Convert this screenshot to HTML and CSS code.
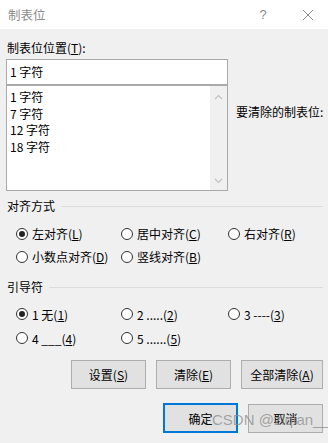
FILE: index.html
```html
<!DOCTYPE html>
<html lang="zh">
<head>
<meta charset="utf-8">
<link rel="stylesheet" href="styles.css">
</head>
<body>
<div class="dialog">
  <div class="titlebar">
    <span class="title">制表位</span>
    <span class="help">?</span>
    <span class="close">
      <svg width="12" height="12" viewBox="0 0 12 12"><path d="M1 1 L11 11 M11 1 L1 11" stroke="#8a8a8a" stroke-width="1" fill="none"/></svg>
    </span>
  </div>
  <div class="content">
    <div class="top">
      <div class="leftcol">
        <div class="label">制表位位置(<u>T</u>):</div>
        <div class="input">1 字符</div>
        <div class="list">
          <div class="items">
            <div class="item">1 字符</div>
            <div class="item">7 字符</div>
            <div class="item">12 字符</div>
            <div class="item">18 字符</div>
          </div>
          <div class="scrollbar">
            <svg width="9" height="6" viewBox="0 0 9 6"><path d="M1 5 L4.5 1.5 L8 5" stroke="#c2c2c2" stroke-width="1.2" fill="none"/></svg>
            <svg width="9" height="6" viewBox="0 0 9 6"><path d="M1 1 L4.5 4.5 L8 1" stroke="#c2c2c2" stroke-width="1.2" fill="none"/></svg>
          </div>
        </div>
      </div>
      <div class="rightcol">要清除的制表位:</div>
    </div>

    <div class="group-head align-head"><span>对齐方式</span><i class="rule"></i></div>
    <div class="radios align">
      <div class="radio"><span class="dot on"></span>左对齐(<u>L</u>)</div>
      <div class="radio"><span class="dot"></span>居中对齐(<u>C</u>)</div>
      <div class="radio"><span class="dot"></span>右对齐(<u>R</u>)</div>
      <div class="radio"><span class="dot"></span>小数点对齐(<u>D</u>)</div>
      <div class="radio"><span class="dot"></span>竖线对齐(<u>B</u>)</div>
    </div>

    <div class="group-head leader-head"><span>引导符</span><i class="rule"></i></div>
    <div class="radios leader">
      <div class="radio"><span class="dot on"></span>1 无(<u>1</u>)</div>
      <div class="radio"><span class="dot"></span>2 .....(<u>2</u>)</div>
      <div class="radio"><span class="dot"></span>3 ----(<u>3</u>)</div>
      <div class="radio"><span class="dot"></span>4 ___(<u>4</u>)</div>
      <div class="radio"><span class="dot"></span>5 ......(<u>5</u>)</div>
    </div>

    <div class="btnrow actions">
      <div class="btn w75">设置(<u>S</u>)</div>
      <div class="btn w75">清除(<u>E</u>)</div>
      <div class="btn w82">全部清除(<u>A</u>)</div>
    </div>
    <div class="btnrow final">
      <div class="btn w75 default">确定</div>
      <div class="btn w75">取消</div>
    </div>
    <div class="watermark">CSDN @ziqian__</div>
  </div>
</div>
</body>
</html>
```

FILE: styles.css
```css
html, body {
  margin: 0;
  padding: 0;
}
body {
  width: 328px;
  height: 443px;
  overflow: hidden;
  font-family: "Noto Sans CJK SC", "Noto Sans", "Liberation Sans", sans-serif;
  font-size: 12px;
  color: #000;
}
u {
  text-decoration: underline;
  text-underline-offset: 1px;
}
.dialog {
  width: 328px;
  height: 443px;
  display: flex;
  flex-direction: column;
}
.titlebar {
  height: 29px;
  background: #fff;
  display: flex;
  align-items: center;
  padding-left: 8px;
  box-sizing: border-box;
}
.title {
  font-size: 12.5px;
  color: #8c8c8c;
  flex: 1;
  line-height: 16px;
}
.help {
  font-family: "Liberation Sans", sans-serif;
  font-size: 13px;
  color: #8c8c8c;
  width: 14px;
  text-align: center;
  margin-right: 32px;
}
.close {
  width: 12px;
  height: 12px;
  margin-right: 14px;
  display: flex;
}
.content {
  flex: 1;
  background: #f0f0f0;
  padding: 11px 0 0 0;
  position: relative;
}
.top {
  display: flex;
  padding-left: 6px;
}
.leftcol {
  width: 222px;
}
.label {
  line-height: 16px;
  padding-left: 1px;
}
.input {
  margin-top: 3px;
  height: 26px;
  box-sizing: border-box;
  border: 1px solid #a9a9a9;
  background: #fff;
  padding-left: 3px;
  line-height: 23px;
}
.list {
  height: 106px;
  box-sizing: border-box;
  border: 1px solid #a9a9a9;
  background: #fff;
  display: flex;
}
.items {
  flex: 1;
  padding: 3px 0 0 3px;
}
.item {
  line-height: 16.5px;
}
.scrollbar {
  width: 17px;
  background: #f0f0f0;
  display: flex;
  flex-direction: column;
  justify-content: space-between;
  align-items: center;
  padding: 8px 0 6px;
  box-sizing: border-box;
}
.rightcol {
  margin-left: 8px;
  margin-top: 64px;
  line-height: 16px;
}
.group-head {
  display: flex;
  align-items: center;
  padding-left: 7px;
  padding-right: 5px;
  line-height: 16px;
}
.align-head { margin-top: 7px; }
.leader-head { margin-top: 11px; }
.group-head .rule {
  flex: 1;
  height: 1px;
  background: #dcdcdc;
  margin-left: 6px;
}
.radios {
  display: grid;
  grid-template-columns: 105px 107px auto;
  padding-left: 16px;
}
.align { margin-top: 8px; grid-auto-rows: 23px; }
.leader { margin-top: 7px; grid-auto-rows: 24px; }
.radio {
  display: flex;
  align-items: center;
  white-space: nowrap;
}
.dot {
  width: 12px;
  height: 12px;
  box-sizing: border-box;
  border: 1px solid #333;
  border-radius: 50%;
  background: #fff;
  margin-right: 4px;
  display: flex;
  align-items: center;
  justify-content: center;
}
.dot.on::after {
  content: "";
  width: 6px;
  height: 6px;
  border-radius: 50%;
  background: #222;
}
.btnrow {
  display: flex;
  justify-content: flex-end;
  gap: 10px;
  padding-right: 5px;
}
.actions { margin-top: 10px; }
.final { margin-top: 15px; }
.btn {
  height: 29px;
  box-sizing: border-box;
  border: 1px solid #adadad;
  background: #e1e1e1;
  display: flex;
  align-items: center;
  justify-content: center;
}
.w75 { width: 75px; }
.w82 { width: 82px; }
.btn.default {
  border: 2px solid #0078d7;
  height: 30px;
  margin-top: -1px;
}
.watermark {
  position: absolute;
  left: 212px;
  top: 382px;
  white-space: nowrap;
  font-family: "Liberation Sans", sans-serif;
  font-size: 15px;
  line-height: 17px;
  color: rgba(140, 140, 140, 0.75);
  pointer-events: none;
}
```
